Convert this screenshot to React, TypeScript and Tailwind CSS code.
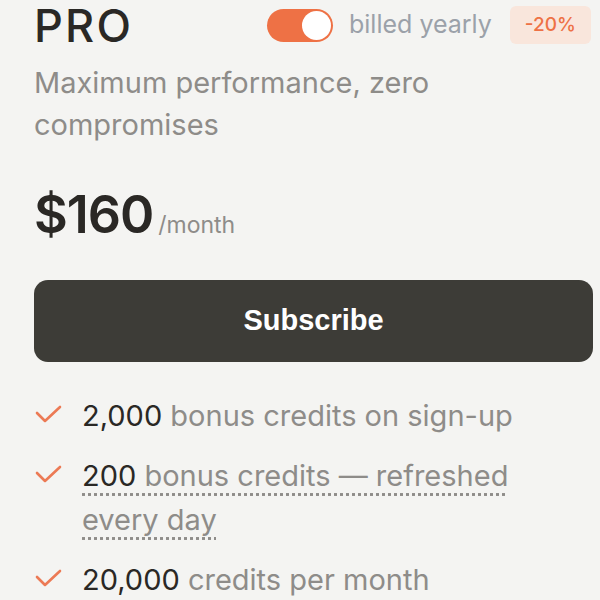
import React from "react";

function Check() {
  return (
    <svg width="28" height="18" viewBox="0 0 28 18" fill="none" stroke="#ec7a55" strokeWidth="2.6" strokeLinecap="round" strokeLinejoin="round" className="shrink-0 mt-[11px]">
      <path d="M3 8l8 8L26 2" />
    </svg>
  );
}

export default function App() {
  return (
    <div className="w-[600px] h-[600px] overflow-hidden bg-[#f4f4f2]" style={{ fontFamily: "Inter, 'Noto Sans', sans-serif" }}>
      <div className="pl-[34px] pr-[7px] pt-[2px]">
        <div className="flex items-center h-[46px]">
          <div className="text-[45px] leading-none font-medium text-[#2a2825] tracking-[0.05em] w-[233px]">PRO</div>
          <div className="w-[66px] h-[33px] rounded-full bg-[#ee7145] relative">
            <div className="absolute right-[2px] top-[2px] w-[29px] h-[29px] rounded-full bg-white"></div>
          </div>
          <div className="ml-[16px] text-[25px] text-[#9ba1a9]">billed yearly</div>
          <div className="ml-[18px] h-[38px] px-[15px] flex items-center rounded-[6px] bg-[#f9e6dc] text-[#ee7145] text-[19px] font-medium">-20%</div>
        </div>
        <div className="mt-[14px] text-[29px] leading-[42px] text-[#8e8c89] w-[440px]">Maximum performance, zero compromises</div>
        <div className="mt-[43px] flex items-baseline">
          <span className="text-[52px] leading-none font-semibold text-[#2a2825] tracking-[-0.02em]">$160</span>
          <span className="ml-[5px] text-[23px] text-[#8e8c89]">/month</span>
        </div>
        <button className="mt-[37px] w-full h-[82px] rounded-[14px] bg-[#3d3c37] text-white text-[29px] font-semibold" style={{ fontFamily: "'Liberation Sans', Arial, sans-serif" }}>Subscribe</button>
        <ul className="mt-[32px] flex flex-col gap-[16px] text-[29px] leading-[44px]">
          <li className="flex gap-[20px]">
            <Check />
            <span className="text-[#8e8c89]"><span className="text-[#2a2825]">2,000</span> bonus credits on sign-up</span>
          </li>
          <li className="flex gap-[20px]">
            <Check />
            <span className="text-[#8e8c89] w-[440px]"><span className="underline decoration-dotted decoration-[#8e8c89] underline-offset-[8px]"><span className="text-[#2a2825]">200</span> bonus credits — refreshed every day</span></span>
          </li>
          <li className="flex gap-[20px]">
            <Check />
            <span className="text-[#8e8c89]"><span className="text-[#2a2825]">20,000</span> credits per month</span>
          </li>
        </ul>
      </div>
    </div>
  );
}
